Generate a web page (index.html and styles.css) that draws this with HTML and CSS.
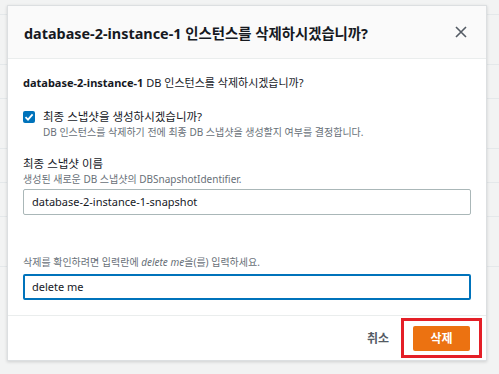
FILE: index.html
```html
<!DOCTYPE html>
<html lang="ko">
<head>
    <meta charset="UTF-8">
    <title>인스턴스 삭제</title>
    <link rel="stylesheet" href="styles.css">
</head>
<body>
    <div class="backdrop">
        <div class="bg-row tall"></div>
        <div class="bg-row"></div>
        <div class="bg-row tall"></div>
        <div class="bg-row"></div>
        <div class="bg-row"></div>
        <div class="bg-row tall"></div>
        <div class="bg-row"></div>
    </div>

    <div class="modal">
        <div class="modal-header">
            <h1>database-2-instance-1 인스턴스를 삭제하시겠습니까?</h1>
            <svg class="close" width="12" height="12" viewBox="0 0 12 12">
                <path d="M1 1 L11 11 M11 1 L1 11" stroke="#545b64" stroke-width="1.6" fill="none"/>
            </svg>
        </div>

        <div class="modal-body">
            <p class="question"><b>database-2-instance-1</b> DB 인스턴스를 삭제하시겠습니까?</p>

            <div class="check-row">
                <span class="checkbox">
                    <svg width="12" height="12" viewBox="0 0 12 12">
                        <path d="M2.5 6.2 L5 8.6 L9.6 3.4" stroke="#fff" stroke-width="1.8" fill="none"/>
                    </svg>
                </span>
                <div>
                    <div class="check-label">최종 스냅샷을 생성하시겠습니까?</div>
                    <div class="hint">DB 인스턴스를 삭제하기 전에 최종 DB 스냅샷을 생성할지 여부를 결정합니다.</div>
                </div>
            </div>

            <div class="field">
                <div class="field-label">최종 스냅샷 이름</div>
                <div class="hint">생성된 새로운 DB 스냅샷의 DBSnapshotIdentifier.</div>
                <div class="input">database-2-instance-1-snapshot</div>
            </div>

            <div class="field confirm">
                <div class="hint">삭제를 확인하려면 입력란에 <i>delete me</i>을(를) 입력하세요.</div>
                <div class="input focused">delete me</div>
            </div>
        </div>

        <div class="modal-footer">
            <span class="cancel">취소</span>
            <div class="highlight">
                <span class="delete-btn">삭제</span>
            </div>
        </div>
    </div>
</body>
</html>
```

FILE: styles.css
```css
* {
    box-sizing: border-box;
    margin: 0;
    padding: 0;
}

body {
    width: 499px;
    height: 374px;
    overflow: hidden;
    background: #f2f3f3;
    font-family: "Noto Sans", "Noto Sans CJK KR", sans-serif;
    color: #16191f;
    position: relative;
}

.backdrop {
    padding-top: 14px;
}

.bg-row {
    height: 34px;
    border-top: 1px solid #e4e8ea;
}

.bg-row.tall {
    height: 50px;
}

.modal {
    position: absolute;
    left: 7px;
    top: 5px;
    width: 480px;
    height: 356px;
    background: white;
    border: 1px solid #dcdfe1;
    box-shadow: 0 1px 3px rgba(0,0,0,0.15);
    display: flex;
    flex-direction: column;
}

.modal-header {
    height: 53px;
    flex-shrink: 0;
    background: #fafafa;
    border-bottom: 1px solid #eaeded;
    display: flex;
    align-items: center;
    justify-content: space-between;
    padding: 0 19px 0 16px;
}

.modal-header h1 {
    font-size: 14.4px;
    font-weight: bold;
}

.modal-body {
    padding: 16px 15px 0 15px;
    flex: 1;
}

.question {
    font-size: 11px;
    line-height: 16px;
    color: #16191f;
}

.question b {
    font-weight: bold;
}

.check-row {
    display: flex;
    margin-top: 17px;
    gap: 8px;
}

.checkbox {
    width: 12px;
    height: 12px;
    margin-top: 3px;
    background: #0073bb;
    border-radius: 2px;
    display: flex;
    align-items: center;
    justify-content: center;
    flex-shrink: 0;
}

.check-label {
    font-size: 11.5px;
    line-height: 17px;
}

.hint {
    font-size: 10px;
    color: #687078;
    line-height: 14px;
}

.hint i {
    font-style: italic;
}

.field {
    margin-top: 16px;
}

.field-label {
    font-size: 11.5px;
    line-height: 17px;
}

.input {
    margin-top: 3px;
    height: 26px;
    border: 1px solid #aab7b8;
    border-radius: 2px;
    padding: 0 8px;
    font-size: 11px;
    line-height: 24px;
    color: #16191f;
}

.confirm {
    margin-top: 40px;
}

.input.focused {
    border: 2px solid #0073bb;
    margin-top: 5px;
    line-height: 22px;
    padding: 0 7px;
}

.modal-footer {
    height: 45px;
    flex-shrink: 0;
    border-top: 1px solid #eaeded;
    display: flex;
    align-items: center;
    justify-content: flex-end;
    padding-right: 4px;
    gap: 12px;
}

.cancel {
    font-size: 12px;
    font-weight: bold;
    color: #545b64;
}

.highlight {
    border: 3px solid #e41f27;
    padding: 5px 9px 4px 9px;
}

.delete-btn {
    display: block;
    width: 57px;
    height: 25px;
    background: #ec7211;
    border-radius: 2px;
    color: white;
    font-size: 12px;
    font-weight: bold;
    text-align: center;
    line-height: 25px;
}
```
